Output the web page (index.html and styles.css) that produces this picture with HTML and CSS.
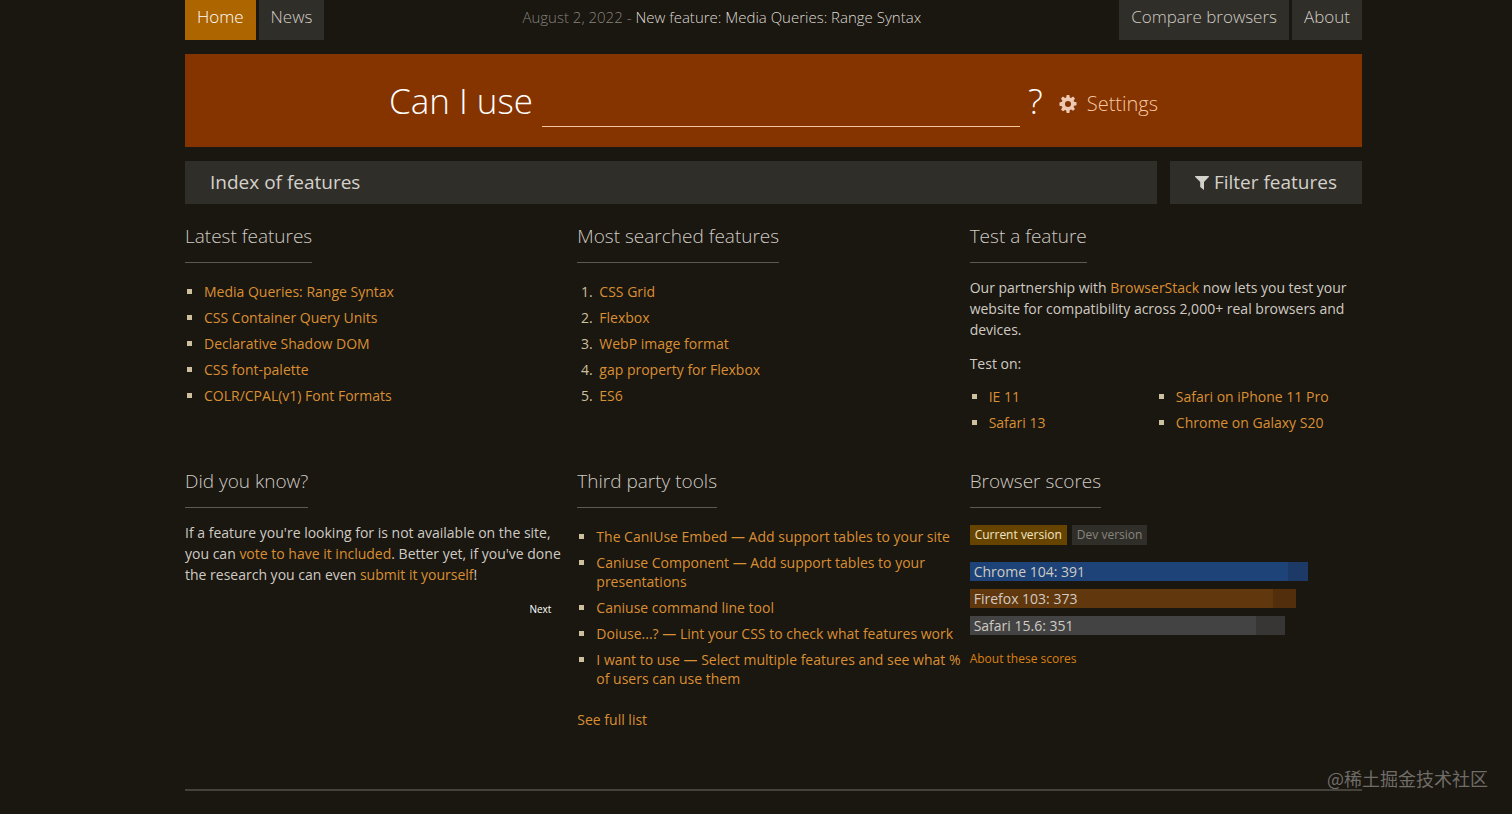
FILE: index.html
```html
<!DOCTYPE html>
<html lang="en">
<head>
<meta charset="utf-8">
<title>Can I use... Support tables for HTML5, CSS3, etc</title>
<link rel="stylesheet" href="styles.css">
</head>
<body>
<div class="page">
  <header class="topbar">
    <nav class="nav">
      <a class="nav-link nav-link-current" href="#">Home</a>
      <a class="nav-link" href="#">News</a>
    </nav>
    <p class="headline"><span class="headline-date">August 2, 2022 - </span><a class="headline-link" href="#">New feature: Media Queries: Range Syntax</a></p>
    <nav class="nav">
      <a class="nav-link" href="#">Compare browsers</a>
      <a class="nav-link" href="#">About</a>
    </nav>
  </header>

  <form class="search">
    <label class="search-label" for="q">Can I use</label>
    <input class="search-input" id="q" type="text" autocomplete="off">
    <span class="search-mark">?</span>
    <button class="settings" type="button">
      <svg class="settings-icon" viewBox="0 0 16 16" aria-hidden="true"><path fill-rule="evenodd" d="M6.8 0h2.4l.4 2.2 1.1.5L12.5 1.400l1.700 1.700-1.200 1.900.4 1 2.200.5v2.600l-2.200.4-.4 1.100 1.200 1.800-1.700 1.700-1.800-1.200-1.100.4L9.200 16H6.800l-.4-2.300-1.100-.4-1.800 1.200-1.700-1.700L3 11l-.4-1.100L.4 9.500V6.600L2.600 6.100 3 5 1.800 3.100l1.700-1.700 1.800 1.300 1.100-.5zM8 5.300a2.700 2.700 0 1 0 0 5.400 2.700 2.700 0 0 0 0-5.400z"/></svg>
      Settings
    </button>
  </form>

  <div class="actions">
    <a class="bar-link index-link" href="#">Index of features</a>
    <button class="bar-link filter" type="button">
      <svg class="filter-icon" viewBox="0 0 14 14" aria-hidden="true"><path d="M.3 0h13.400q.5.300.1.900L9 6v8L5.200 11V6L.2.900Q-.2.300.3 0z"/></svg>
      Filter features
    </button>
  </div>

  <main class="grid">
    <section class="panel">
      <h2 class="title">Latest features</h2>
      <ul class="list">
        <li><a href="#">Media Queries: Range Syntax</a></li>
        <li><a href="#">CSS Container Query Units</a></li>
        <li><a href="#">Declarative Shadow DOM</a></li>
        <li><a href="#">CSS font-palette</a></li>
        <li><a href="#">COLR/CPAL(v1) Font Formats</a></li>
      </ul>
    </section>

    <section class="panel">
      <h2 class="title">Most searched features</h2>
      <ol class="list list-numbered">
        <li><a href="#">CSS Grid</a></li>
        <li><a href="#">Flexbox</a></li>
        <li><a href="#">WebP image format</a></li>
        <li><a href="#">gap property for Flexbox</a></li>
        <li><a href="#">ES6</a></li>
      </ol>
    </section>

    <section class="panel">
      <h2 class="title">Test a feature</h2>
      <p class="text">Our partnership with <a href="#">BrowserStack</a> now lets you test your website for compatibility across 2,000+ real browsers and devices.</p>
      <p class="text">Test on:</p>
      <ul class="list list-columns">
        <li><a href="#">IE 11</a></li>
        <li><a href="#">Safari on iPhone 11 Pro</a></li>
        <li><a href="#">Safari 13</a></li>
        <li><a href="#">Chrome on Galaxy S20</a></li>
      </ul>
    </section>

    <section class="panel">
      <h2 class="title">Did you know?</h2>
      <p class="text">If a feature you're looking for is not available on the site, you can <a href="#">vote to have it included</a>. Better yet, if you've done the research you can even <a href="#">submit it yourself</a>!</p>
      <button class="next" type="button">Next</button>
    </section>

    <section class="panel">
      <h2 class="title">Third party tools</h2>
      <ul class="list">
        <li><a href="#">The CanIUse Embed — Add support tables to your site</a></li>
        <li><a href="#">Caniuse Component — Add support tables to your presentations</a></li>
        <li><a href="#">Caniuse command line tool</a></li>
        <li><a href="#">Doiuse...? — Lint your CSS to check what features work</a></li>
        <li><a href="#">I want to use — Select multiple features and see what % of users can use them</a></li>
      </ul>
      <p class="more"><a href="#">See full list</a></p>
    </section>

    <section class="panel">
      <h2 class="title">Browser scores</h2>
      <div class="versions">
        <button class="version version-current" type="button">Current version</button>
        <button class="version" type="button">Dev version</button>
      </div>
      <ul class="scores">
        <li class="score score-chrome" style="width:88%"><span class="score-fill" style="width:94%">Chrome 104: 391</span></li>
        <li class="score score-firefox" style="width:85%"><span class="score-fill" style="width:93%">Firefox 103: 373</span></li>
        <li class="score score-safari" style="width:82%"><span class="score-fill" style="width:91%">Safari 15.6: 351</span></li>
      </ul>
      <p class="about-scores"><a href="#">About these scores</a></p>
    </section>
  </main>
</div>
<div class="watermark">@稀土掘金技术社区</div>
</body>
</html>
```
FILE: styles.css
```css
* {
  box-sizing: border-box;
}

body {
  margin: 0;
  background: #1a1610;
  color: #cfcbc3;
  font: 14px/19px "Open Sans", "Noto Sans", sans-serif;
}

a {
  color: #d98f33;
  text-decoration: none;
}

button {
  border: 0;
  font: inherit;
  cursor: pointer;
}

p {
  margin: 0;
}

.page {
  padding: 0 150px 0 185px;
}

.topbar {
  display: flex;
  justify-content: space-between;
  height: 40px;
}

.nav {
  display: flex;
  gap: 3px;
}

.nav-link {
  padding: 5px 12px 11px;
  background: #302e29;
  color: #cfcbc3;
  font-size: 17px;
  font-weight: 300;
  line-height: 24px;
}

.nav-link-current {
  background: #ad6500;
  color: #fff;
}

.headline {
  height: 26px;
  overflow: hidden;
  padding-top: 7px;
  font-size: 15px;
  font-weight: 300;
  line-height: 21px;
}

.headline-date {
  color: #85827b;
}

.headline-link {
  color: #dedad2;
}

.search {
  display: flex;
  align-items: flex-start;
  justify-content: center;
  margin-top: 14px;
  padding: 20px 0;
  background: #853400;
  color: #fff;
}

.search-label,
.search-mark {
  font-size: 35px;
  font-weight: 300;
  line-height: 53px;
}

.search-input {
  width: 478px;
  height: 53px;
  margin: 0 8px 0 9px;
  border: 0;
  border-bottom: 1px solid #f5c4a0;
  outline: 0;
  background: transparent;
  color: #fff;
  font: 300 35px "Open Sans", sans-serif;
}

.settings {
  display: flex;
  align-items: center;
  gap: 10px;
  margin-left: 16px;
  padding: 7px 0 0;
  background: transparent;
  color: #f5c7a4;
  font-size: 20px;
  font-weight: 300;
  line-height: 46px;
}

.settings-icon {
  width: 18px;
  height: 18px;
  fill: #edc9b4;
}

.actions {
  display: flex;
  gap: 13px;
  margin-top: 14px;
}

.bar-link {
  padding: 8px 25px;
  background: #302e29;
  color: #d4d1ca;
  font-size: 19px;
  line-height: 27px;
}

.index-link {
  flex: 1;
}

.filter {
  display: flex;
  align-items: center;
  gap: 5px;
}

.filter-icon {
  width: 14px;
  height: 14px;
  fill: #d4d1ca;
}

.grid {
  display: grid;
  grid-template-columns: repeat(3, 1fr);
  margin-top: 16px;
  padding-bottom: 27px;
  border-bottom: 2px solid #45423b;
}

.panel {
  padding: 0 8px 33px 0;
}

.title {
  width: fit-content;
  margin: 0 0 14px;
  padding: 3px 0 12px;
  border-bottom: 1px solid #5b5952;
  font-size: 19px;
  font-weight: 300;
  line-height: 27px;
}

.list {
  display: grid;
  gap: 7px;
  margin: 0;
  padding: 5px 0 0 19px;
  list-style: square;
}

.list li::marker {
  color: #cdc09e;
}

.list-numbered {
  list-style: decimal;
}

.list-numbered li {
  padding-left: 3px;
}

.list-columns {
  grid-template-columns: 1fr 1fr;
  column-gap: 9px;
  padding-top: 0;
}

.text {
  margin-bottom: 13px;
  line-height: 21px;
}

.next {
  display: block;
  margin-left: auto;
  padding: 4px 18px 4px 7px;
  background: transparent;
  color: #fff;
  font-size: 10px;
  line-height: 14px;
}

.more {
  margin-top: 22px;
}

.versions {
  display: flex;
  gap: 5px;
  padding-top: 3px;
}

.version {
  padding: 1px 5px;
  background: #302e29;
  color: #88857d;
  font-size: 12px;
  line-height: 18px;
}

.version-current {
  background: #664400;
  color: #f3e5c9;
}

.scores {
  display: grid;
  gap: 8px;
  margin: 17px 0 14px;
  padding: 0;
  list-style: none;
}

.score-fill {
  display: block;
  padding-left: 4px;
  line-height: 19px;
}

.score-chrome {
  background: #1d3a66;
}

.score-chrome .score-fill {
  background: #1d4378;
}

.score-firefox {
  background: #532e0c;
}

.score-firefox .score-fill {
  background: #61370e;
}

.score-safari {
  background: #373635;
}

.score-safari .score-fill {
  background: #434344;
}

.about-scores {
  font-size: 12px;
}

.about-scores a {
  color: #d98012;
}

.watermark {
  position: absolute;
  right: 24px;
  bottom: 24px;
  color: #6f6d68;
  font: 18px/24px "Noto Sans CJK SC", sans-serif;
}
```
